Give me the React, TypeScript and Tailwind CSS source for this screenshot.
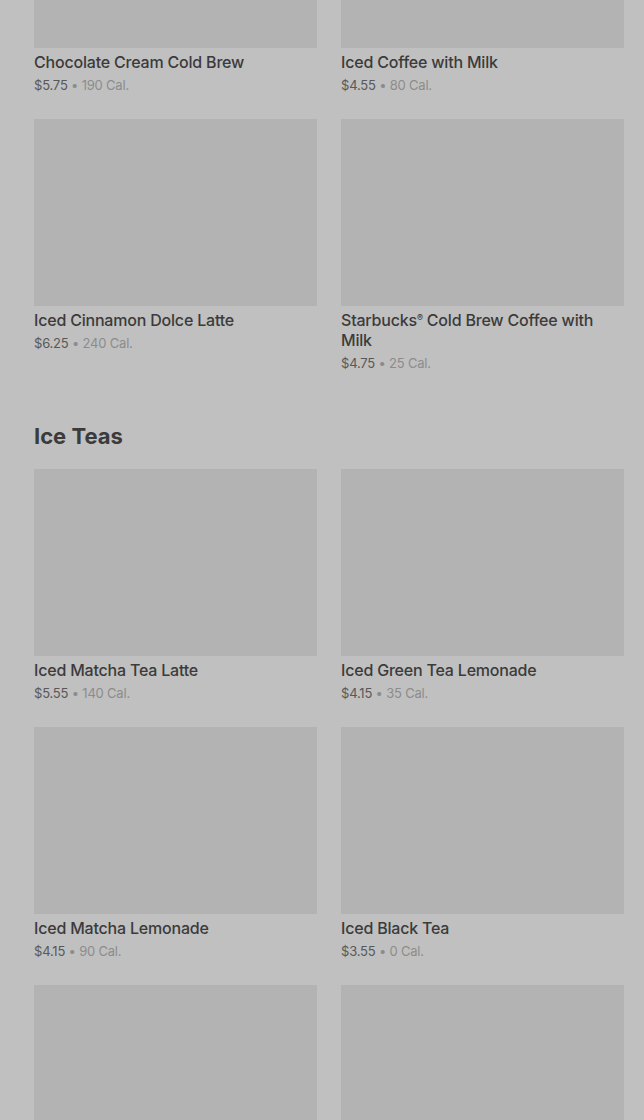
const coffee = [
  { name: "Chocolate Cream Cold Brew", price: "$5.75", cal: "190 Cal." },
  { name: "Iced Coffee with Milk", price: "$4.55", cal: "80 Cal." },
  { name: "Iced Cinnamon Dolce Latte", price: "$6.25", cal: "240 Cal." },
  { name: "Starbucks® Cold Brew Coffee with Milk", price: "$4.75", cal: "25 Cal." },
];

const teas = [
  { name: "Iced Matcha Tea Latte", price: "$5.55", cal: "140 Cal." },
  { name: "Iced Green Tea Lemonade", price: "$4.15", cal: "35 Cal." },
  { name: "Iced Matcha Lemonade", price: "$4.15", cal: "90 Cal." },
  { name: "Iced Black Tea", price: "$3.55", cal: "0 Cal." },
  { name: "Iced Peach Green Tea", price: "$4.15", cal: "60 Cal." },
  { name: "Iced Passion Tango Tea", price: "$4.15", cal: "0 Cal." },
];

type Item = { name: string; price: string; cal: string };

function ItemName({ name }: { name: string }) {
  if (!name.includes("®")) return <>{name}</>;
  const [a, b] = name.split("®");
  return (
    <>
      {a}
      <span className="relative -top-[5px] text-[9px] leading-none">®</span>
      {b}
    </>
  );
}

function ItemCard({ item }: { item: Item }) {
  return (
    <div className="flex flex-col">
      <div className="h-[187px] w-full bg-[#b3b3b3]" />
      <div className="mt-1 text-[16px] leading-5 font-medium tracking-[-0.2px] text-[#3b3b3b]">
        <ItemName name={item.name} />
      </div>
      <div className="mt-1 text-[13px] leading-[18px] tracking-[-0.2px] text-[#585858]">
        {item.price}
        <span className="text-[#8c8c8c]"> • {item.cal}</span>
      </div>
    </div>
  );
}

export default function App() {
  return (
    <div
      className="h-[1120px] overflow-hidden bg-[#c0c0c0] pl-[34px] pr-[20px]"
      style={{ fontFamily: "Inter, 'Liberation Sans', sans-serif" }}
    >
      <div className="-mt-[139px]">
        <div className="grid grid-cols-2 gap-x-6 gap-y-[25px]">
          {coffee.map((item) => (
            <ItemCard key={item.name} item={item} />
          ))}
        </div>
        <h2 className="mt-12 text-[22px] leading-8 font-bold text-[#3b3b3b]">
          Ice Teas
        </h2>
        <div className="mt-[17px] grid grid-cols-2 gap-x-6 gap-y-[25px]">
          {teas.map((item) => (
            <ItemCard key={item.name} item={item} />
          ))}
        </div>
      </div>
    </div>
  );
}
